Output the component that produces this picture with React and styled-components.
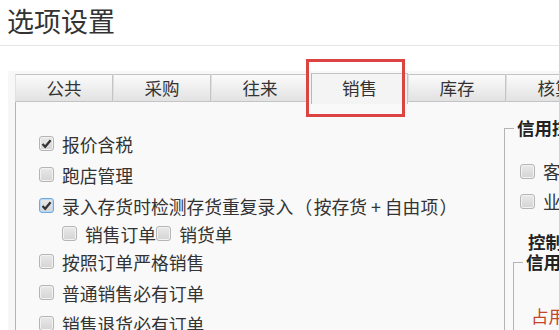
import React from "react";
import styled, { createGlobalStyle } from "styled-components";

const GlobalStyle = createGlobalStyle`
  html, body {
    margin: 0;
    padding: 0;
    background: #ffffff;
    overflow: hidden;
  }
  body {
    font-family: "Noto Sans CJK SC", "Noto Sans", sans-serif;
    color: #333;
  }
`;

const tabs = ["公共", "采购", "往来", "销售", "库存", "核算"];

const Check = ({ checked, focus }) => (
  <Box $focus={focus}>
    {checked && (
      <svg width="11" height="11" viewBox="0 0 11 11">
        <path d="M1.5 6 L4.2 8.8 L9.6 2.2" fill="none" stroke="#333" strokeWidth="2.2" />
      </svg>
    )}
  </Box>
);

const App = () => {
  const leftOptions = [
    { label: "报价含税", checked: true },
    { label: "跑店管理" },
    {
      label: (
        <>
          录入存货时检测存货重复录入<Paren>（</Paren>按存货 + 自由项<Paren>）</Paren>
        </>
      ),
      checked: true,
      focus: true,
    },
    { sub: ["销售订单", "销货单"] },
    { label: "按照订单严格销售" },
    { label: "普通销售必有订单" },
    { label: "销售退货必有订单" },
  ];

  return (
    <Page>
      <GlobalStyle />
      <Header>选项设置</Header>
      <Outer>
        <TabRow>
          {tabs.map((t) => (
            <Tab key={t} $active={t === "销售"}>
              {t}
              {t === "销售" && <Highlight />}
            </Tab>
          ))}
        </TabRow>
        <Panel>
          <LeftCol>
            {leftOptions.map((o, i) =>
              o.sub ? (
                <SubRow key={i}>
                  {o.sub.map((s) => (
                    <Option key={s}>
                      <Check />
                      <span>{s}</span>
                    </Option>
                  ))}
                </SubRow>
              ) : (
                <Row key={i}>
                  <Option>
                    <Check checked={o.checked} focus={o.focus} />
                    <span>{o.label}</span>
                  </Option>
                </Row>
              )
            )}
          </LeftCol>
          <RightCol>
            <Fieldset>
              <Legend>信用控制设置</Legend>
              <RightRow>
                <Option>
                  <Check />
                  <span>客户信用额度控制</span>
                </Option>
              </RightRow>
              <RightRow>
                <Option>
                  <Check />
                  <span>业务员信用控制</span>
                </Option>
              </RightRow>
              <BoldLine>控制方式</BoldLine>
              <InnerFieldset>
                <InnerLegend>信用额度</InnerLegend>
                <RedText>占用额度</RedText>
              </InnerFieldset>
            </Fieldset>
          </RightCol>
        </Panel>
      </Outer>
    </Page>
  );
};

const Page = styled.div`
  width: 559px;
  height: 330px;
  overflow: hidden;
  background: #fff;
`;

const Header = styled.div`
  height: 45px;
  padding-left: 7px;
  font-size: 27px;
  line-height: 42px;
  color: #333;
  border-bottom: 1px solid #e6e6e6;
`;

const Outer = styled.div`
  margin: 25px 0 0 8px;
  padding: 3px 0 0 7px;
  background: #f7f7f7;
  height: 400px;
`;

const TabRow = styled.div`
  display: flex;
  height: 28px;
  align-items: flex-end;
`;

const Tab = styled.div`
  position: relative;
  flex: 0 0 auto;
  width: ${(p) => (p.$active ? "97px" : "98px")};
  height: ${(p) => (p.$active ? "31px" : "28px")};
  margin: ${(p) => (p.$active ? "0 0 -2px 2px" : "0")};
  box-sizing: border-box;
  border: 1px solid #c4c4c4;
  border-left: ${(p) => (p.$active ? "1px solid #b8b8b8" : "1px solid #e0e0e0")};
  border-bottom: ${(p) => (p.$active ? "none" : "1px solid #c4c4c4")};
  background: ${(p) =>
    p.$active ? "#f4f4f4" : "linear-gradient(#fbfbfb, #ececec 60%, #e2e2e2)"};
  font-size: 17.5px;
  line-height: ${(p) => (p.$active ? "28px" : "25px")};
  text-align: center;
  color: #333;
  z-index: ${(p) => (p.$active ? 2 : 1)};
`;

const Highlight = styled.div`
  position: absolute;
  left: -6px;
  top: -15px;
  width: 99px;
  height: 58px;
  box-sizing: border-box;
  border: 3px solid #dc4343;
  pointer-events: none;
`;

const Panel = styled.div`
  display: grid;
  grid-template-columns: 488px 1fr;
  background: #f9f9f9;
  border-left: 1px solid #b4b4b4;
  height: 300px;
`;

const LeftCol = styled.div`
  padding: 26px 0 0 23px;
`;

const Row = styled.div`
  height: 31px;
  display: flex;
  align-items: center;
`;

const SubRow = styled.div`
  height: 25px;
  display: flex;
  align-items: center;
  padding-left: 23px;
`;

const Option = styled.label`
  display: flex;
  align-items: center;
  font-size: 17.8px;
  line-height: 20px;
  color: #333;
  white-space: nowrap;
  gap: 8px;
`;

const Paren = styled.span`
  display: inline-block;
  width: 1.15em;
  text-align: center;
`;

const Box = styled.span`
  flex: 0 0 auto;
  width: 15px;
  height: 15px;
  box-sizing: border-box;
  border: 1px solid ${(p) => (p.$focus ? "#6ea8e0" : "#b5b5b5")};
  border-radius: 3px;
  background: linear-gradient(#e9e9e9, #d4d4d4);
  box-shadow: inset 0 0 0 1px ${(p) => (p.$focus ? "#bcd8f3" : "#f2f2f2")};
  display: flex;
  align-items: center;
  justify-content: center;
`;

const RightCol = styled.div`
  padding-top: 16px;
`;

const Fieldset = styled.fieldset`
  margin: 0;
  padding: 18px 0 0 15px;
  border: none;
  border-top: 1px solid #b4b4b4;
  border-left: 1px solid #b4b4b4;
  min-width: 0;
  height: 400px;
`;

const Legend = styled.legend`
  padding: 0 2px 0 3px;
  margin-left: -6px;
  font-size: 17.5px;
  line-height: 20px;
  font-weight: bold;
  color: #222;
  white-space: nowrap;
`;

const InnerLegend = styled(Legend)`
  margin-left: -8px;
`;

const RightRow = styled.div`
  height: 30px;
  display: flex;
  align-items: center;
`;

const BoldLine = styled.div`
  margin-top: 16px;
  padding-left: 8px;
  font-size: 17.5px;
  font-weight: bold;
  color: #222;
  white-space: nowrap;
  line-height: 20px;
`;

const InnerFieldset = styled(Fieldset)`
  margin: 0 0 0 -7px;
  padding: 34px 0 0 17px;
`;

const RedText = styled.div`
  font-size: 17.5px;
  line-height: 20px;
  color: #c4462a;
  white-space: nowrap;
`;

export default App;
